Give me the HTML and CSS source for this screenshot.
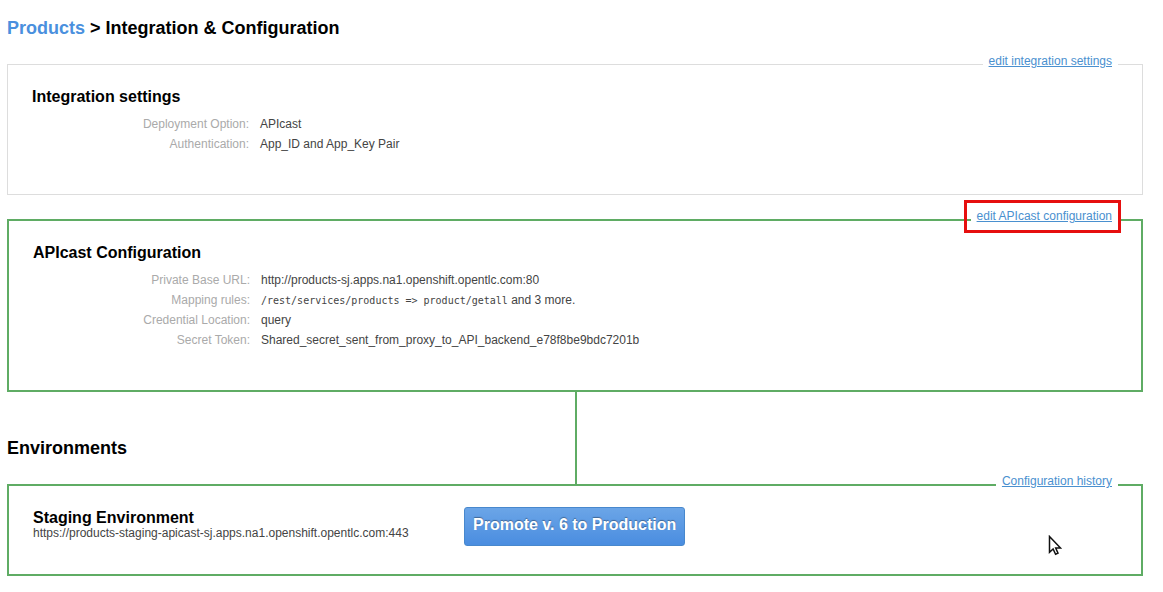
FILE: index.html
```html
<!DOCTYPE html>
<html lang="en">
<head>
<meta charset="utf-8">
<title>Integration &amp; Configuration</title>
<link rel="stylesheet" href="styles.css">
</head>
<body>
<main class="page">
  <h1 class="title"><a class="title-link" href="#">Products</a> &gt; Integration &amp; Configuration</h1>

  <section class="card">
    <a class="card-action" href="#">edit integration settings</a>
    <h2 class="card-title">Integration settings</h2>
    <dl class="details">
      <dt>Deployment Option:</dt><dd>APIcast</dd>
      <dt>Authentication:</dt><dd>App_ID and App_Key Pair</dd>
    </dl>
  </section>

  <section class="card card-active card-config">
    <a class="card-action card-action-marked" href="#">edit APIcast configuration</a>
    <h2 class="card-title">APIcast Configuration</h2>
    <dl class="details">
      <dt>Private Base URL:</dt><dd>http://products-sj.apps.na1.openshift.opentlc.com:80</dd>
      <dt>Mapping rules:</dt><dd><code>/rest/services/products =&gt; product/getall</code> and 3 more.</dd>
      <dt>Credential Location:</dt><dd>query</dd>
      <dt>Secret Token:</dt><dd>Shared_secret_sent_from_proxy_to_API_backend_e78f8be9bdc7201b</dd>
    </dl>
  </section>

  <div class="connector">
    <h2 class="section-title">Environments</h2>
  </div>

  <section class="card card-active card-environment">
    <a class="card-action" href="#">Configuration history</a>
    <div class="environment">
      <h3 class="environment-title">Staging Environment</h3>
      <p class="environment-url">https://products-staging-apicast-sj.apps.na1.openshift.opentlc.com:443</p>
    </div>
    <button class="promote" type="button">Promote v. 6 to Production</button>
    <svg class="pointer" viewBox="0 0 14 21" width="14" height="21" aria-hidden="true">
      <path d="M1.5 1.5V17.2L5.1 13.9L7.6 19.2L10 18.1L7.7 13H12.5Z" fill="#fff" stroke="#111" stroke-width="1.5"/>
    </svg>
  </section>
</main>
</body>
</html>
```

FILE: styles.css
```css
* {
  box-sizing: border-box;
}

body {
  margin: 0;
  background: #fff;
  color: #444;
  font: 12px/20px "Liberation Sans", Arial, sans-serif;
}

h1, h2, h3, p, dl, dd {
  margin: 0;
}

.page {
  padding: 17px 20px 16px 7px;
}

.title,
.section-title {
  color: #000;
  font-size: 18px;
  line-height: 22px;
}

.title {
  margin-bottom: 25px;
}

.title-link {
  color: #4a90de;
  text-decoration: none;
}

.card {
  position: relative;
  padding: 22px 24px 40px;
  border: 1px solid #ddd;
}

.card-active {
  border: 2px solid #5fac64;
}

.card-config {
  margin-top: 24px;
}

.card-title,
.environment-title {
  color: #000;
  font-size: 16px;
  line-height: 20px;
}

.card-title {
  margin-bottom: 7px;
}

/* Sits over the top border of its card */
.card-action {
  position: absolute;
  top: -11px;
  right: 24px;
  padding: 0 6px;
  background: #fff;
  color: #4a90cf;
  line-height: 14px;
}

.card-active .card-action {
  top: -12px;
  right: 23px;
}

.card-action-marked::after {
  content: "";
  position: absolute;
  inset: -9px -3px -10px -7px;
  border: 3px solid #e60f0f;
}

.details {
  display: grid;
  grid-template-columns: 217px 1fr;
  column-gap: 11px;
}

.details dt {
  color: #aaa;
  text-align: right;
}

.details code {
  font: 10px "DejaVu Sans Mono", monospace;
}

.connector {
  position: relative;
  padding: 45px 0 25px;
}

.connector::before {
  content: "";
  position: absolute;
  top: 0;
  bottom: 0;
  left: 50%;
  width: 2px;
  background: #5fac64;
}

.card-environment {
  display: grid;
  grid-template-columns: 431px 1fr;
  align-items: start;
  padding: 21px 24px 28px;
}

.environment {
  padding-top: 1px;
}

.environment-url {
  line-height: 10px;
}

.promote {
  justify-self: start;
  padding: 7px 8px 11px;
  border: 1px solid #4888cd;
  border-radius: 3px;
  background: linear-gradient(#6ba5e7, #4a8de0);
  color: #fff;
  font: bold 16px/19px "Liberation Sans", Arial, sans-serif;
  text-shadow: 0 -1px 1px rgba(0, 0, 0, 0.35);
}

.pointer {
  position: absolute;
  right: 79px;
  bottom: 18px;
}
```
